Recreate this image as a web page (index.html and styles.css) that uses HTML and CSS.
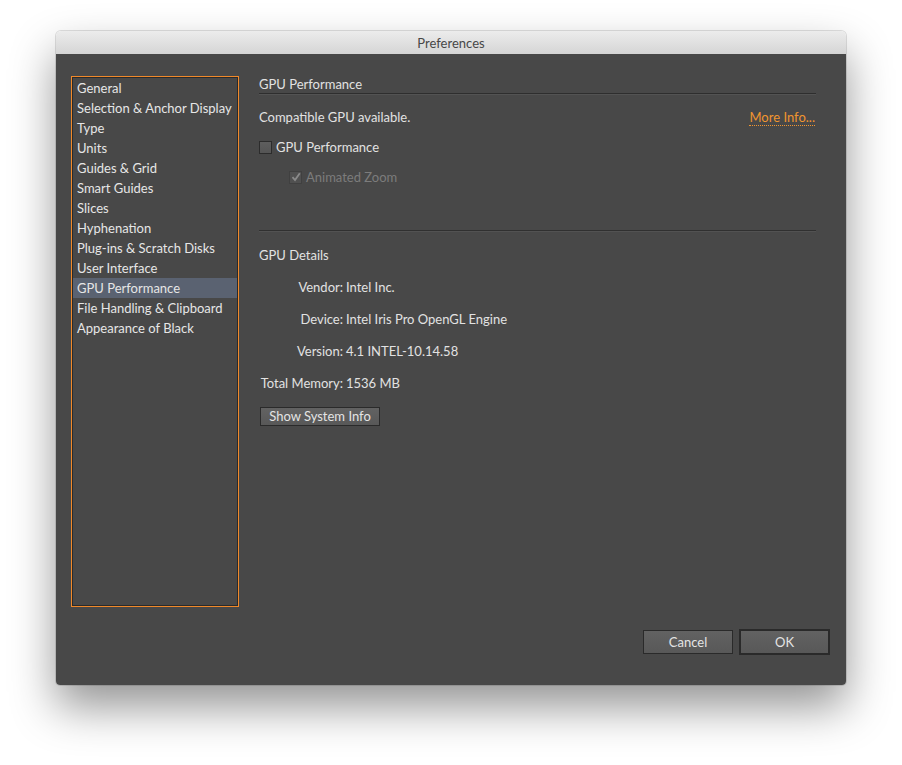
FILE: index.html
```html
<!DOCTYPE html>
<html>
<head>
<meta charset="utf-8">
<title>Preferences</title>
<link rel="stylesheet" href="styles.css">
</head>
<body>
<div class="window">
  <div class="titlebar">Preferences</div>
  <div class="win-body">
    <div class="main">
      <div class="sidebar">
        <ul class="nav">
          <li>General</li>
          <li>Selection &amp; Anchor Display</li>
          <li>Type</li>
          <li>Units</li>
          <li>Guides &amp; Grid</li>
          <li>Smart Guides</li>
          <li>Slices</li>
          <li>Hyphenation</li>
          <li>Plug-ins &amp; Scratch Disks</li>
          <li>User Interface</li>
          <li class="active">GPU Performance</li>
          <li>File Handling &amp; Clipboard</li>
          <li>Appearance of Black</li>
        </ul>
      </div>
      <div class="panel">
        <div class="section-title">GPU Performance</div>
        <div class="row-between">
          <span>Compatible GPU available.</span>
          <span class="link">More Info...</span>
        </div>
        <label class="check">
          <span class="box"></span>
          <span>GPU Performance</span>
        </label>
        <label class="check sub disabled">
          <span class="box checked">
            <svg width="10" height="10" viewBox="0 0 10 10"><path d="M1.5 5.2 L4 8 L8.8 1.2" fill="none" stroke="#8a8a8a" stroke-width="1.8"/></svg>
          </span>
          <span>Animated Zoom</span>
        </label>
        <div class="divider"></div>
        <div class="subhead">GPU Details</div>
        <div class="details">
          <span class="lbl">Vendor:</span><span>Intel Inc.</span>
          <span class="lbl">Device:</span><span>Intel Iris Pro OpenGL Engine</span>
          <span class="lbl">Version:</span><span>4.1 INTEL-10.14.58</span>
          <span class="lbl">Total Memory:</span><span>1536 MB</span>
        </div>
        <button class="btn sys">Show System Info</button>
      </div>
    </div>
    <div class="footer">
      <button class="btn cancel">Cancel</button>
      <button class="btn ok">OK</button>
    </div>
  </div>
</div>
</body>
</html>
```
FILE: styles.css
```css
html {
  margin: 0;
  padding: 0;
  background: #ffffff;
}
body {
  margin: 0;
  padding: 31px 56px;
  min-height: 765px;
  box-sizing: border-box;
  font-family: Lato, "Open Sans", "Liberation Sans", sans-serif;
  font-size: 13px;
  color: #e2e2e2;
}
.window {
  width: 790px;
  border-radius: 5px 5px 4px 4px;
  overflow: hidden;
  box-shadow: 0 22px 45px rgba(0,0,0,0.42), 0 0 0 1px rgba(0,0,0,0.12);
}
.titlebar {
  height: 23px;
  line-height: 24px;
  text-align: center;
  color: #474747;
  background: linear-gradient(#ececec, #d5d5d5);
}
.win-body {
  background: #484848;
  padding: 22px 16px 30px 15px;
}
.main {
  display: flex;
  height: 531px;
}
.sidebar {
  width: 168px;
  height: 531px;
  box-sizing: border-box;
  border: 1px solid #f0892a;
  background: #484848;
}
.nav {
  list-style: none;
  margin: 0;
  padding: 0;
  height: 100%;
  box-sizing: border-box;
  border: 1px solid #2a2a2a;
}
.nav li {
  height: 20px;
  line-height: 20px;
  padding-left: 4px;
  white-space: nowrap;
  color: #e6e6e6;
}
.nav li.active {
  background: #5a6271;
}
.panel {
  flex: 1;
  margin-left: 20px;
  margin-right: 14px;
  line-height: 16px;
}
.section-title {
  padding-bottom: 1px;
  border-bottom: 1px solid #2e2e2e;
  box-shadow: 0 1px 0 #535353;
}
.row-between {
  display: flex;
  justify-content: space-between;
  margin-top: 15px;
}
.link {
  color: #f0952f;
  border-bottom: 1px dotted #f0952f;
  line-height: 15px;
  margin-top: 1px;
  margin-right: 1px;
}
.check {
  display: flex;
  align-items: center;
  gap: 4px;
  margin-top: 13px;
  height: 16px;
}
.check.sub {
  margin-top: 14px;
  margin-left: 30px;
}
.check.disabled {
  color: #7c7c7c;
}
.box {
  width: 11px;
  height: 11px;
  border: 1px solid #2c2c2c;
  background: linear-gradient(#5e5e5e, #555555);
  display: flex;
  align-items: center;
  justify-content: center;
}
.box.checked {
  border-color: #404040;
  background: #505050;
}
.divider {
  margin-top: 45px;
  border-top: 1px solid #303030;
  box-shadow: 0 1px 0 #525252;
}
.subhead {
  margin-top: 16px;
}
.details {
  display: grid;
  grid-template-columns: 84px auto;
  column-gap: 3px;
  row-gap: 16px;
  margin-top: 16px;
  justify-content: start;
}
.lbl {
  text-align: right;
}
.btn {
  font-family: inherit;
  font-size: 13px;
  color: #e4e4e4;
  background: linear-gradient(#626262, #585858);
  border: 1px solid #2a2a2a;
  padding: 0;
  margin: 0;
  cursor: default;
}
.sys {
  display: block;
  margin-top: 16px;
  margin-left: 1px;
  width: 120px;
  height: 19px;
  line-height: 17px;
}
.footer {
  display: flex;
  justify-content: flex-end;
  align-items: center;
  gap: 6px;
  margin-top: 22px;
  height: 26px;
}
.cancel {
  width: 90px;
  height: 24px;
}
.ok {
  width: 91px;
  height: 26px;
  border: 2px solid #2a2a2a;
}
```
